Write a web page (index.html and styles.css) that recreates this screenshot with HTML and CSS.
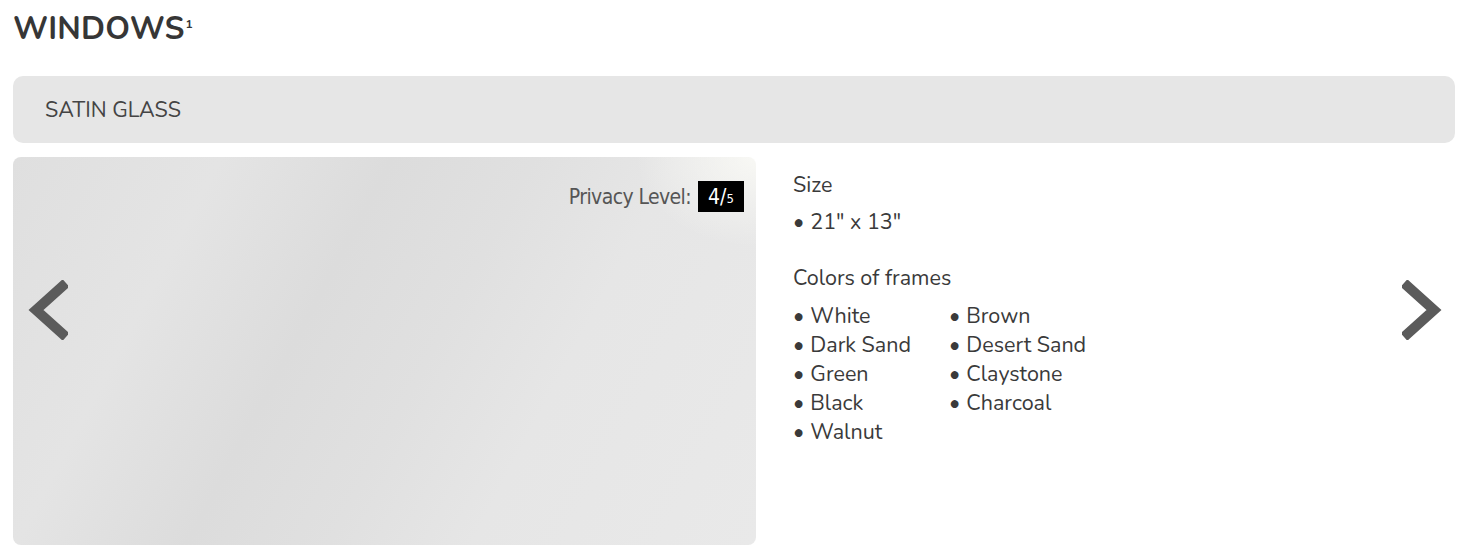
FILE: index.html
```html
<!DOCTYPE html>
<html lang="en">
<head>
<meta charset="utf-8">
<title>Windows</title>
<link rel="stylesheet" href="styles.css">
</head>
<body>
<div class="page">
  <h1 class="title">WINDOWS<sup class="note">1</sup></h1>
  <div class="bar">SATIN GLASS</div>
  <div class="content">
    <div class="media">
      <button class="arrow arrow-prev" aria-label="Previous">
        <svg width="40" height="60" viewBox="0 0 40 60"><polyline points="38,3 8,30 38,57" fill="none" stroke="#5b5b5b" stroke-width="10" stroke-linejoin="miter"/></svg>
      </button>
      <div class="privacy">Privacy Level: <span class="badge">4/<small>5</small></span></div>
    </div>
    <div class="details">
      <h2 class="label">Size</h2>
      <ul class="list">
        <li>21" x 13"</li>
      </ul>
      <h2 class="label label-gap">Colors of frames</h2>
      <ul class="list list-cols">
        <li>White</li>
        <li>Dark Sand</li>
        <li>Green</li>
        <li>Black</li>
        <li>Walnut</li>
        <li>Brown</li>
        <li>Desert Sand</li>
        <li>Claystone</li>
        <li>Charcoal</li>
      </ul>
    </div>
    <button class="arrow arrow-next" aria-label="Next">
      <svg width="40" height="60" viewBox="0 0 40 60"><polyline points="2,3 32,30 2,57" fill="none" stroke="#5b5b5b" stroke-width="10" stroke-linejoin="miter"/></svg>
    </button>
  </div>
</div>
</body>
</html>
```
FILE: styles.css
```css
* { box-sizing: border-box; }
body {
  margin: 0;
  background: #ffffff;
  font-family: "Nunito", "Lato", "Open Sans", sans-serif;
  color: #3a3a3a;
}
.page {
  padding: 0 5px 0 13px;
}
.title {
  margin: 0;
  padding-top: 9px;
  height: 76px;
  font-size: 31.5px;
  font-weight: 700;
  color: #363636;
  letter-spacing: 0.2px;
  line-height: 40px;
}
.note {
  font-size: 12px;
  font-weight: 700;
  vertical-align: top;
  position: relative;
  top: -5px;
  margin-left: 1px;
}
.bar {
  height: 67px;
  border-radius: 10px;
  background: #e6e6e6;
  padding-left: 32px;
  display: flex;
  align-items: center;
  font-size: 21.5px;
  color: #444;
}
.content {
  display: flex;
  margin-top: 14px;
}
.media {
  position: relative;
  width: 743px;
  height: 388px;
  border-radius: 8px;
  flex: none;
  background:
    radial-gradient(ellipse 120px 90px at 100% 0%, rgba(250,250,246,0.9), rgba(250,250,246,0) 100%),
    linear-gradient(118deg, #dfdfdf 0%, #e4e4e4 22%, #dcdcdc 40%, #e0e0e0 55%, #e6e6e6 70%, #e9e9e9 100%);
}
.arrow {
  border: 0;
  background: none;
  padding: 0;
  cursor: pointer;
}
.arrow-prev {
  position: absolute;
  left: 15px;
  top: 123px;
}
.privacy {
  position: absolute;
  right: 12px;
  top: 24px;
  display: flex;
  align-items: center;
  gap: 7px;
  font-family: "DejaVu Sans Condensed", "DejaVu Sans", sans-serif;
  font-stretch: condensed;
  font-weight: 300;
  font-size: 21px;
  color: #555;
  letter-spacing: -0.6px;
}
.badge {
  background: #000;
  color: #fff;
  width: 46px;
  height: 31px;
  display: flex;
  align-items: center;
  justify-content: center;
  font-size: 21px;
  letter-spacing: 0;
}
.badge small {
  font-size: 13px;
  margin-top: 4px;
}
.details {
  flex: 1;
  padding-left: 37px;
  padding-top: 15px;
}
.label {
  margin: 0;
  font-size: 21.5px;
  font-weight: 400;
  line-height: 26px;
  color: #3a3a3a;
}
.label-gap {
  margin-top: 28px;
}
.list {
  list-style: none;
  margin: 0;
  padding: 0;
  font-size: 21.5px;
  line-height: 29px;
  color: #3a3a3a;
}
.list:first-of-type {
  margin-top: 10px;
}
.list li::before {
  content: "\2022";
  margin-right: 6px;
}
.list-cols {
  margin-top: 11px;
  display: grid;
  grid-template-rows: repeat(5, 29px);
  grid-auto-flow: column;
  grid-template-columns: 156px auto;
  justify-content: start;
}
.arrow-next {
  align-self: flex-start;
  margin-top: 123px;
  margin-right: 13px;
}
```
